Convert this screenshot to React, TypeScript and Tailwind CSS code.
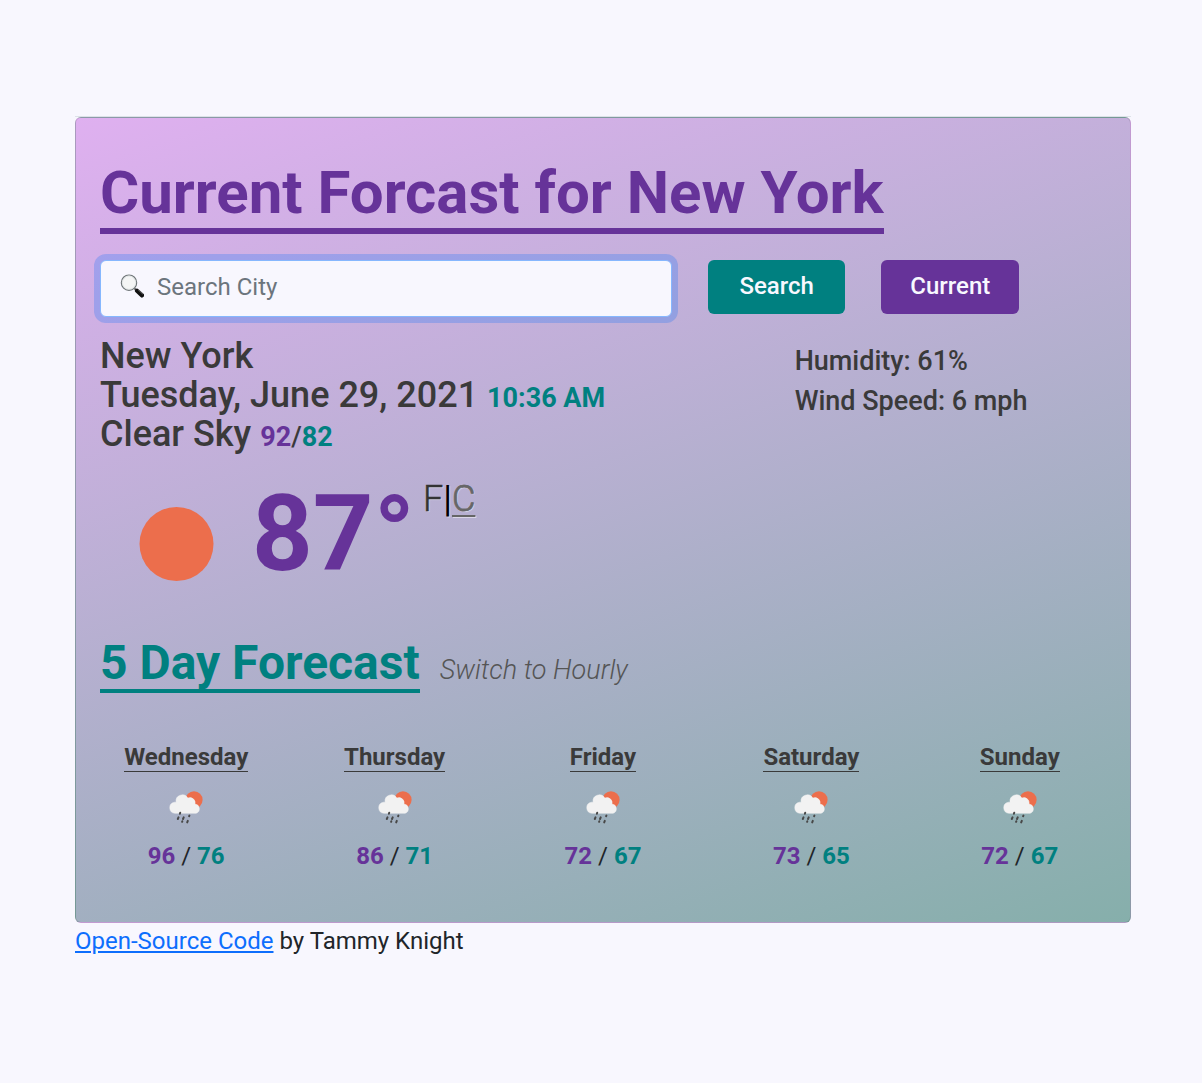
const days = [
  { name: "Wednesday", high: 96, low: 76 },
  { name: "Thursday", high: 86, low: 71 },
  { name: "Friday", high: 72, low: 67 },
  { name: "Saturday", high: 73, low: 65 },
  { name: "Sunday", high: 72, low: 67 },
];

function Magnifier() {
  return (
    <svg
      viewBox="0 0 24 24"
      className="pointer-events-none absolute left-5 top-[14px] size-6"
      aria-hidden="true"
    >
      <path d="M14.2 14.2l3 3" stroke="#555" strokeWidth="1.8" />
      <path d="M17 16.8l5 4.6" stroke="#111" strokeWidth="4.2" strokeLinecap="round" />
      <path d="M18.4 16l4.2 3.9" stroke="#777" strokeWidth="0.9" strokeLinecap="round" />
      <circle cx="9" cy="8.7" r="7.7" fill="#f4f5f5" stroke="#6f7678" strokeWidth="1.1" />
      <circle cx="9" cy="8.7" r="6.6" fill="none" stroke="#d5dadb" strokeWidth="0.6" />
    </svg>
  );
}

function RainIcon() {
  return (
    <svg viewBox="-4 0 80 60" className="h-[60px] w-20" aria-hidden="true">
      <circle cx="44" cy="19.8" r="8.6" fill="#ec6e4c" />
      <path
        d="M25 33.3a5.6 5.6 0 0 1-.6-11.1c.6-.1 1.2-.1 1.7 0a6.3 6.3 0 0 1 11.7-4.1 5.2 5.2 0 0 1 7.2 5.9 4.8 4.8 0 0 1 1.1 9.3z"
        fill="#f2f2f2"
        stroke="#f2f2f2"
        strokeWidth="0.5"
      />
      <path
        d="M30.2 32.8l-.3.9M28.5 37.3l-.7 1.7M33.7 37.3l-.7 1.7M39.4 35.6l-.3.6M32.3 41.3l-.2.5M37.8 40.9l-.6 1.5"
        stroke="#484848"
        strokeWidth="2"
        strokeLinecap="round"
      />
    </svg>
  );
}

export default function App() {
  return (
    <div className="flex min-h-screen flex-col bg-[#f8f7fe] px-[71px] pt-[116px] font-[Roboto,sans-serif] text-2xl/9 text-[#212529]">
      <div className="ml-1 w-full max-w-[1056px]">
        <main className="border-t border-[#dde2e8]">
          <div className="rounded-md border border-black/[0.125] bg-[linear-gradient(161deg,#dfb0f0_0%,#86afab_100%)] px-6 pt-10 pb-12">
            <h1 className="inline-block border-b-6 border-[#663399] text-[60px]/[70px] font-bold text-[#663399]">
              Current Forcast for New York
            </h1>

            <form className="mt-[26px] grid grid-cols-12 gap-x-9" onSubmit={(e) => e.preventDefault()}>
              <div className="relative col-span-7">
                <Magnifier />
                <input
                  type="search"
                  aria-label="Search City"
                  placeholder="Search City"
                  className="h-[57px] w-full rounded-md border border-[#86b7fe] bg-[#f8f7fe] pr-4 pb-1 pl-14 shadow-[0_0_0_6px_rgba(13,110,253,0.25)] outline-none placeholder:text-[#6c757d]"
                />
              </div>
              <button type="submit" className="col-span-2 h-[54px] rounded-md bg-[#008080] pb-0.5 font-medium text-[#f8f8ff]">
                Search
              </button>
              <button type="button" className="col-span-2 h-[54px] rounded-md bg-[#663399] pb-0.5 font-medium text-[#f8f8ff]">
                Current
              </button>
            </form>

            <section className="mt-5 grid grid-cols-12 gap-x-9 font-medium text-[#3a3a3a]">
              <div className="col-span-8 text-4xl/[39px]">
                <h2>New York</h2>
                <p>
                  Tuesday, June 29, 2021{" "}
                  <span className="text-[27px]/[30px] font-bold text-[#008080]">10:36 AM</span>
                </p>
                <p>
                  Clear Sky{" "}
                  <span className="text-[27px]/[30px] font-bold">
                    <span className="text-[#663399]">92</span>
                    <span className="font-medium">/</span>
                    <span className="text-[#008080]">82</span>
                  </span>
                </p>
              </div>
              <div className="col-span-4 pt-1 text-[27px]/[40px]">
                <p>Humidity: 61%</p>
                <p>Wind Speed: 6 mph</p>
              </div>
            </section>

            <section className="mt-3 flex h-[144px] items-start">
              <svg viewBox="0 0 76 76" className="mt-10 ml-[38px] size-[76px]" aria-label="Clear sky">
                <circle cx="38.5" cy="38" r="37" fill="#ec6e4c" />
              </svg>
              <strong className="ml-[38px] text-[106px]/[136px] font-bold text-[#663399]">87°</strong>
              <div className="mt-2.5 ml-2 flex text-4xl/[46px] [text-shadow:1px_1px_1px_rgba(255,255,255,0.5)]">
                <span className="font-light text-[#333] [-webkit-text-stroke:0.5px]">F</span>
                <span className="text-black">|</span>
                <a
                  href="#celsius"
                  className="font-light text-[#666] underline decoration-2 underline-offset-4 [-webkit-text-stroke:0.5px]"
                >
                  C
                </a>
              </div>
            </section>

            <section className="mt-[27px] flex items-baseline gap-5">
              <h2 className="border-b-4 border-[#008080] text-5xl/[52px] font-bold text-[#008080]">5 Day Forecast</h2>
              <button type="button" className="text-[27px]/9 font-light text-[#555] italic">
                Switch to Hourly
              </button>
            </section>

            <ul className="mt-[50px] grid grid-cols-5 gap-x-9 text-center">
              {days.map((day) => (
                <li key={day.name} className="flex flex-col items-center">
                  <h3 className="border-b border-[#3a3a3a] text-2xl/7 font-bold text-[#3a3a3a]">{day.name}</h3>
                  <div className="mt-2">
                    <RainIcon />
                  </div>
                  <p className="-mt-0.5">
                    <span className="font-bold text-[#663399]">{day.high}</span> /{" "}
                    <span className="font-bold text-[#008080]">{day.low}</span>
                  </p>
                </li>
              ))}
            </ul>
          </div>
        </main>
        <footer>
          <a href="#source" className="text-[#0d6efd] underline">
            Open-Source Code
          </a>{" "}
          by Tammy Knight
        </footer>
      </div>
    </div>
  );
}
